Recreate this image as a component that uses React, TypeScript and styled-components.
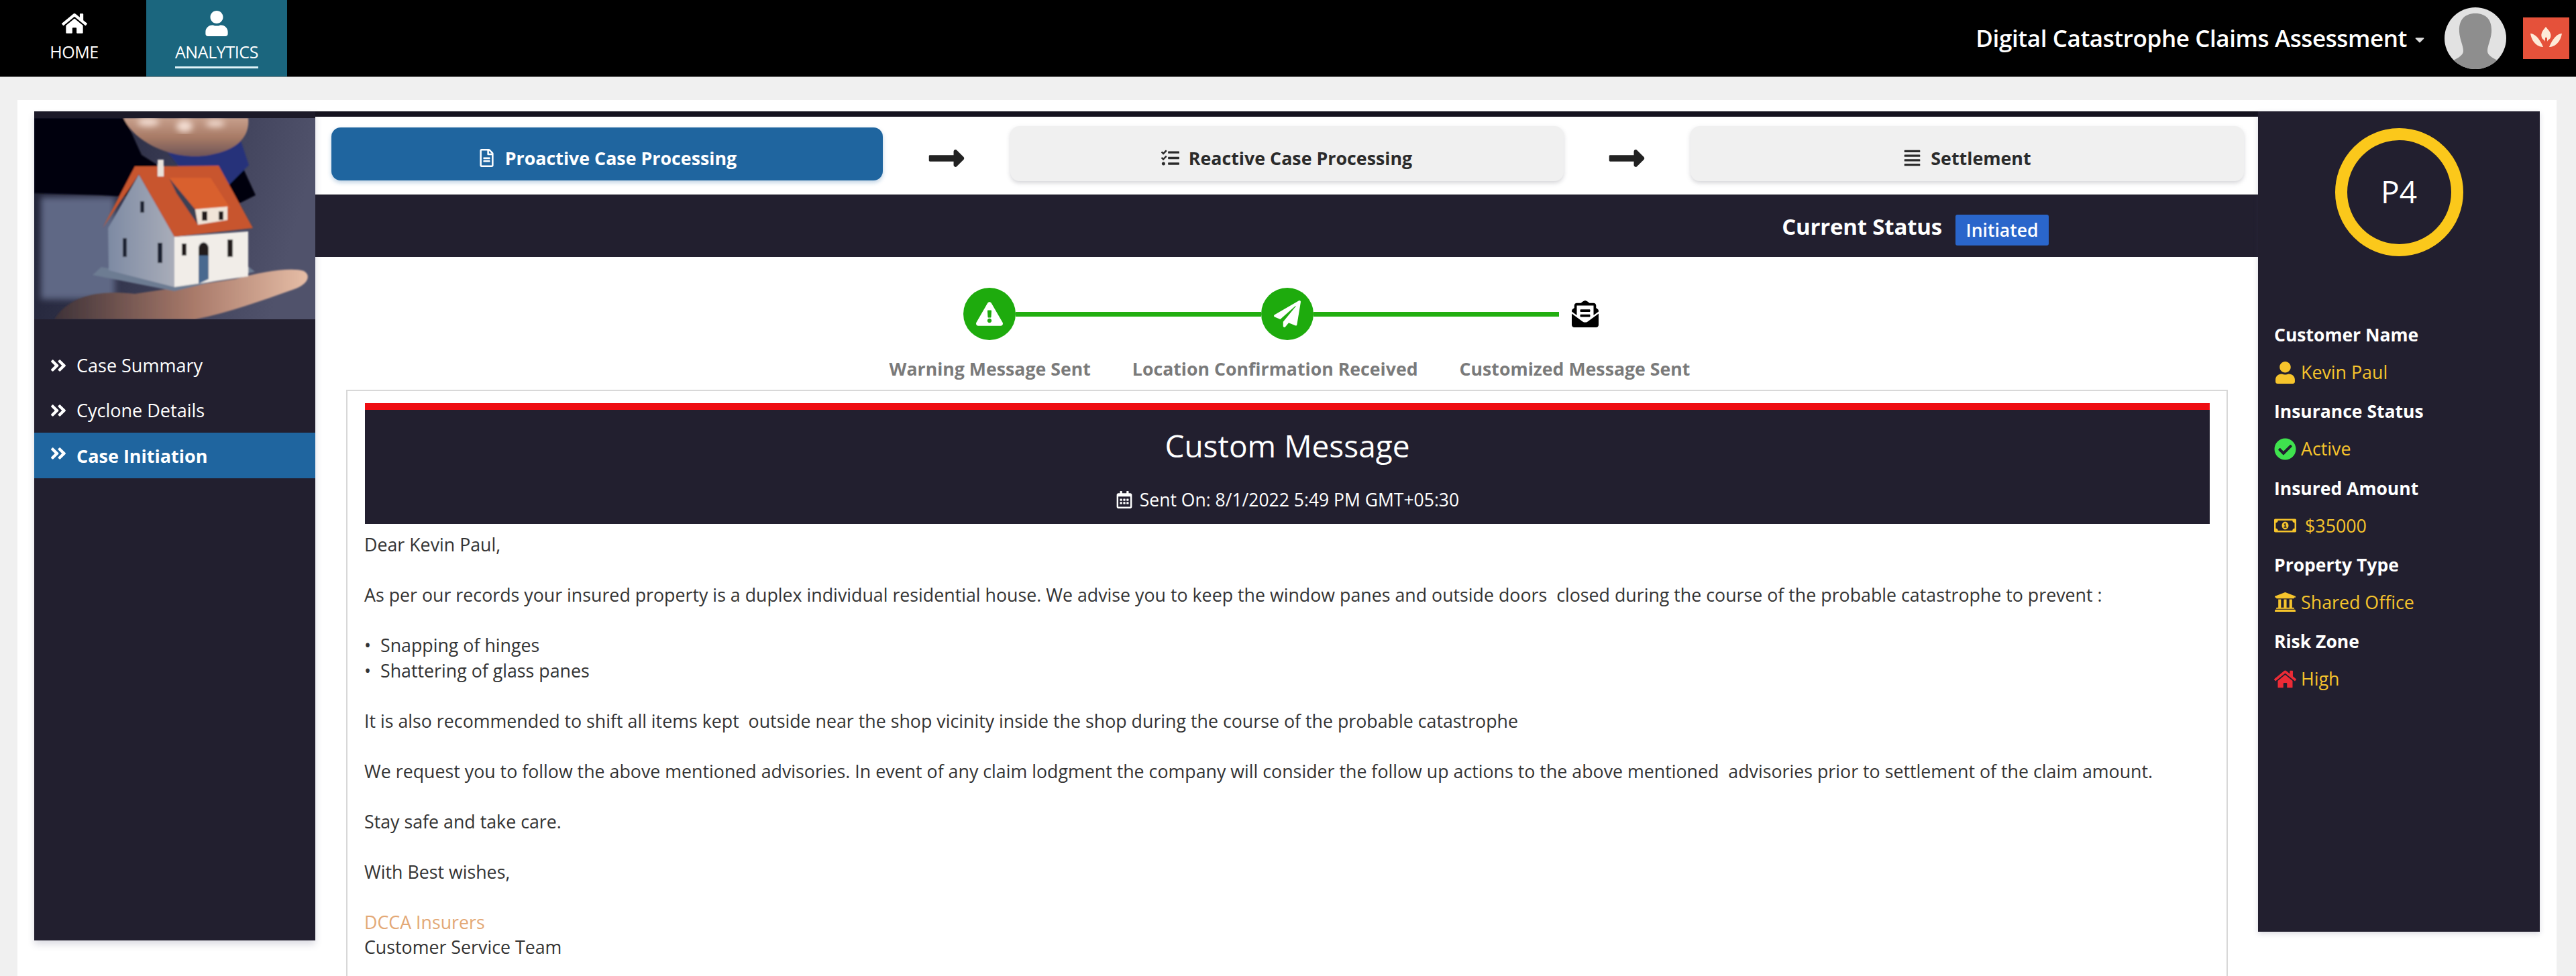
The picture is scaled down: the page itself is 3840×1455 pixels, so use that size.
import React from "react"
import styled, { createGlobalStyle } from "styled-components"
import {
  FaAlignJustify,
  FaAngleDoubleRight,
  FaCaretDown,
  FaCheckCircle,
  FaEnvelopeOpenText,
  FaExclamationTriangle,
  FaHome,
  FaLongArrowAltRight,
  FaPaperPlane,
  FaRegCalendarAlt,
  FaRegFileAlt,
  FaRegMoneyBillAlt,
  FaTasks,
  FaUniversity,
  FaUser,
} from "react-icons/fa"

const dark = "#221f2f"
const blue = "#1f659f"
const amber = "#f6c42c"

const GlobalStyle = createGlobalStyle`
  html, body {
    margin: 0;
    padding: 0;
    background: #f0f0f0;
  }
  body {
    font-family: "Open Sans", "Liberation Sans", sans-serif;
    height: 1455px;
    overflow: hidden;
  }
  * {
    box-sizing: border-box;
  }
`

const TopBar = styled.header`
  height: 115px;
  background: #000;
  border-bottom: 1px solid #8a8a8a;
  display: flex;
  align-items: stretch;
  justify-content: space-between;
  color: #fff;
`

const TabList = styled.nav`
  display: flex;
`

const Tab = styled.div<{ $active?: boolean; $width: number }>`
  width: ${(p) => p.$width}px;
  background: ${(p) => (p.$active ? "#1b667e" : "transparent")};
  display: flex;
  flex-direction: column;
  align-items: center;
  padding-top: 14px;
  padding-left: ${(p) => (p.$active ? 0 : 3)}px;
  font-size: 25px;
  line-height: 34px;
  letter-spacing: -0.4px;
`

const TabIcon = styled.div`
  height: 42px;
  font-size: 38px;
  line-height: 0;
  display: flex;
  align-items: center;
`

const TabLabel = styled.span<{ $active?: boolean }>`
  padding-bottom: 5px;
  margin-top: 4px;
  border-bottom: ${(p) => (p.$active ? "3px solid #dff3f8" : "none")};
`

const TopRight = styled.div`
  display: flex;
  align-items: center;
  padding-right: 10px;
`

const AppTitle = styled.div`
  font-size: 35px;
  font-weight: 600;
  letter-spacing: -0.4px;
  display: flex;
  align-items: center;
  gap: 8px;
  margin-top: -2px;
`

const Caret = styled(FaCaretDown)`
  font-size: 22px;
  color: #ddd;
  margin-top: 6px;
`

const Avatar = styled.svg`
  width: 94px;
  height: 94px;
  margin-left: 25px;
  display: block;
`

const Logo = styled.svg`
  width: 69px;
  height: 62px;
  margin-left: 24px;
  display: block;
`

const Card = styled.main`
  margin: 34px 29px 0 26px;
  padding: 17px 25px 0;
  background: #fff;
  height: 1345px;
  overflow: hidden;
`

const Columns = styled.div`
  display: flex;
  align-items: flex-start;
`

const Sidebar = styled.aside`
  flex: 0 0 419px;
  height: 1236px;
  background: ${dark};
  border-top: 10px solid #1c1a29;
  box-shadow: 0 6px 10px rgba(60, 60, 100, 0.18);
`

const Photo = styled.svg`
  display: block;
  width: 419px;
  height: 300px;
`

const Menu = styled.ul`
  list-style: none;
  margin: 0;
  padding: 35px 0 0;
`

const MenuItem = styled.li<{ $active?: boolean }>`
  height: ${(p) => (p.$active ? 68 : 67)}px;
  display: flex;
  align-items: center;
  padding-left: 22px;
  gap: 13px;
  font-size: 27px;
  color: #fff;
  font-weight: ${(p) => (p.$active ? 700 : 400)};
  background: ${(p) => (p.$active ? blue : "transparent")};
  svg {
    font-size: 28px;
    flex: none;
    margin-top: ${(p) => (p.$active ? -6 : 0)}px;
  }
`

const Center = styled.section`
  flex: 1;
  min-width: 0;
  border-top: 8px solid #15131f;
`

const Steps = styled.div`
  height: 116px;
  display: flex;
  padding: 14px 21px 0 24px;
  align-items: flex-start;
`

const StepButton = styled.div<{ $active?: boolean }>`
  flex: 0 0 ${(p) => (p.$active ? 822 : 825)}px;
  height: ${(p) => (p.$active ? 79 : 82)}px;
  margin-top: ${(p) => (p.$active ? 2 : 0)}px;
  padding-top: 12px;
  border-radius: 14px;
  background: ${(p) => (p.$active ? blue : "#f0f0f0")};
  color: ${(p) => (p.$active ? "#fff" : "#2b2b2b")};
  box-shadow: ${(p) =>
    p.$active
      ? "0 3px 6px rgba(31, 101, 159, 0.3)"
      : "0 3px 6px rgba(120, 120, 130, 0.3)"};
  font-size: 26.8px;
  font-weight: 700;
  display: flex;
  align-items: center;
  justify-content: center;
  gap: 14px;
  svg {
    font-size: 27px;
  }
`

const StepArrow = styled.div`
  flex: 1;
  height: 82px;
  padding-top: 13px;
  display: flex;
  align-items: center;
  justify-content: center;
  font-size: 60px;
  color: #222;
`

const StatusBar = styled.div`
  height: 93px;
  background: ${dark};
  border-top: 1px solid #15131f;
  display: flex;
  align-items: center;
  justify-content: flex-end;
  padding: 12px 312px 0 0;
  gap: 20px;
  color: #fff;
`

const StatusLabel = styled.span`
  font-size: 33px;
  font-weight: 700;
  letter-spacing: -0.2px;
  margin-top: -12px;
`

const Badge = styled.span`
  width: 139px;
  height: 46px;
  background: #2a66cb;
  border-radius: 3px;
  font-size: 26.5px;
  font-weight: 600;
  display: flex;
  align-items: center;
  justify-content: center;
`

const IconRow = styled.div`
  display: flex;
  align-items: center;
  justify-content: center;
  margin-top: 46px;
  padding-right: 18px;
`

const StepCircle = styled.div`
  width: 78px;
  height: 78px;
  border-radius: 50%;
  background: #1eab0d;
  color: #fff;
  font-size: 40px;
  display: flex;
  align-items: center;
  justify-content: center;
`

const StepLine = styled.div`
  width: 366px;
  height: 7px;
  background: #22ae10;
`

const EndIcon = styled.div`
  margin-left: 19px;
  width: 40px;
  font-size: 40px;
  line-height: 0;
  color: #000;
`

const LabelRow = styled.div`
  display: flex;
  justify-content: center;
  gap: 62px;
  padding-left: 9px;
  margin-top: 24px;
  height: 50px;
  font-size: 26.7px;
  line-height: 38px;
  font-weight: 700;
  color: #7a7a7a;
`

const MessageBox = styled.article`
  margin: 0 45px 0 46px;
  border: 2px solid #d8d8d8;
  padding: 18px 25px 60px 26px;
`

const MessageHead = styled.div`
  height: 180px;
  background: ${dark};
  border-top: 10px solid #ee0d12;
  color: #fff;
  text-align: center;
  padding-top: 22px;
`

const MessageTitle = styled.h2`
  margin: 0;
  font-size: 46px;
  line-height: 62px;
  font-weight: 400;
`

const SentOn = styled.div`
  margin-top: 32px;
  font-size: 26.5px;
  line-height: 36px;
  display: flex;
  align-items: center;
  justify-content: center;
  gap: 10px;
  svg {
    font-size: 26px;
  }
`

const Body = styled.div`
  margin-top: 12px;
  margin-left: -1px;
  font-size: 26.78px;
  line-height: 37.5px;
  color: #333;
`

const Line = styled.p<{ $gap?: boolean }>`
  margin: ${(p) => (p.$gap ? "37.5px" : "0")} 0 0;
  white-space: pre-wrap;
`

const Insurer = styled.span`
  color: #e3a875;
`

const Details = styled.aside`
  flex: 0 0 420px;
  height: 1223px;
  background: ${dark};
  padding: 0 0 0 24px;
  box-shadow: 0 3px 8px rgba(60, 60, 100, 0.18);
  color: #fff;
`

const RingWrap = styled.div`
  display: flex;
  padding: 25px 0 0 0;
  margin-left: -24px;
  justify-content: center;
  margin-bottom: 89px;
`

const Ring = styled.div`
  width: 191px;
  height: 191px;
  border: 18px solid #fbc81b;
  border-radius: 50%;
  font-size: 46px;
  padding-bottom: 3px;
  display: flex;
  align-items: center;
  justify-content: center;
`

const Field = styled.div`
  height: 114.3px;
`

const FieldName = styled.div`
  font-size: 26.5px;
  line-height: 56px;
  font-weight: 700;
`

const FieldValue = styled.div<{ $gap?: number }>`
  font-size: 26.8px;
  line-height: 56px;
  color: ${amber};
  display: flex;
  align-items: center;
  gap: ${(p) => p.$gap ?? 7}px;
`

const FieldIcon = styled.span<{ $color?: string }>`
  width: 33px;
  font-size: 33px;
  line-height: 0;
  color: ${(p) => p.$color ?? amber};
  display: flex;
  justify-content: center;
`

const HousePhoto = () => (
  <Photo viewBox="0 0 419 300" preserveAspectRatio="none">
    <defs>
      <linearGradient id="bg" x1="0" x2="1" y1="0" y2="0.2">
        <stop offset="0" stopColor="#1d1f33" />
        <stop offset="0.6" stopColor="#3c3e57" />
        <stop offset="1" stopColor="#50526b" />
      </linearGradient>
      <linearGradient id="wall" x1="0" x2="1" y1="0" y2="0">
        <stop offset="0" stopColor="#7d8aa3" />
        <stop offset="1" stopColor="#a9adb9" />
      </linearGradient>
      <linearGradient id="skin" x1="0" x2="1" y1="0" y2="0">
        <stop offset="0" stopColor="#3e3238" />
        <stop offset="0.55" stopColor="#a97a6a" />
        <stop offset="1" stopColor="#e6bda6" />
      </linearGradient>
      <linearGradient id="topHand" x1="0" x2="0" y1="0" y2="1">
        <stop offset="0" stopColor="#c79f8c" />
        <stop offset="0.5" stopColor="#a87b66" />
        <stop offset="1" stopColor="#6f5558" />
      </linearGradient>
      <filter id="soft" x="-5%" y="-5%" width="110%" height="110%">
        <feGaussianBlur stdDeviation="1.1" />
      </filter>
      <filter id="softer" x="-10%" y="-10%" width="120%" height="120%">
        <feGaussianBlur stdDeviation="5" />
      </filter>
    </defs>
    <rect width="419" height="300" fill="url(#bg)" />
    <g filter="url(#softer)">
      <polygon points="10,118 120,118 120,270 10,270" fill="#5f6885" />
    </g>
    <g filter="url(#soft)">
      <polygon
        points="0,0 135,0 160,55 200,80 300,50 330,115 300,130 180,120 100,115 0,112"
        fill="#06060f"
      />
      <polygon points="190,40 305,25 320,70 290,100 230,90" fill="#27337a" />
      <path
        d="M133 0 H319 C322 30 300 48 262 55 C225 62 190 50 170 38 C150 26 140 14 133 0 Z"
        fill="url(#topHand)"
      />
      <path
        d="M30 300 C50 268 90 255 150 262 L300 240 C340 228 385 222 402 228 C415 236 405 250 385 256 C340 272 290 290 240 300 Z"
        fill="url(#skin)"
      />
      <polygon points="87,234 209,258 329,229 320,222 209,240 100,222" fill="#6d7b92" />
      <polygon points="156,84 110,164 111,227 209,252 209,177" fill="url(#wall)" />
      <polygon points="209,177 319,169 319,236 209,252" fill="#f1ede8" />
      <polygon points="156,72 275,71 326,164 209,177 156,84 102,164 150,72" fill="#c8542e" />
      <polygon points="201,89 240,136 244,159 212,112" fill="#3a3f52" />
      <polygon points="201,89 263,89 292,134 240,136" fill="#d9602f" />
      <polygon points="240,136 288,132 288,152 244,159" fill="#f0e4d8" />
      <rect x="250" y="139" width="8" height="14" fill="#221a1a" />
      <rect x="275" y="139" width="7" height="13" fill="#221a1a" />
      <rect x="184" y="62" width="9" height="25" fill="#e9e2da" />
      <rect x="158" y="124" width="6" height="17" fill="#1f2230" />
      <rect x="132" y="179" width="6" height="28" fill="#1f2230" />
      <rect x="184" y="186" width="7" height="30" fill="#1f2230" />
      <rect x="220" y="187" width="7" height="18" fill="#221a1a" />
      <rect x="288" y="181" width="8" height="26" fill="#221a1a" />
      <path d="M245 247 V196 C245 182 260 182 260 196 V240 Z" fill="#49698f" />
      <path d="M245 196 C245 182 260 182 260 196 V205 H245 Z" fill="#221a1a" />
    </g>
    <g filter="url(#softer)" fill="#f3ddd2">
      <ellipse cx="170" cy="6" rx="16" ry="6" />
      <ellipse cx="224" cy="12" rx="12" ry="9" />
      <ellipse cx="270" cy="8" rx="14" ry="5" />
    </g>
  </Photo>
)

const fields = [
  {
    name: "Customer Name",
    value: "Kevin Paul",
    icon: <FaUser />,
  },
  {
    name: "Insurance Status",
    value: "Active",
    icon: <FaCheckCircle />,
    color: "#3fe24e",
  },
  {
    name: "Insured Amount",
    value: "$35000",
    icon: <FaRegMoneyBillAlt />,
    gap: 13,
  },
  {
    name: "Property Type",
    value: "Shared Office",
    icon: <FaUniversity />,
  },
  {
    name: "Risk Zone",
    value: "High",
    icon: <FaHome />,
    color: "#ec2b36",
  },
]

const App = () => {
  return (
    <>
      <GlobalStyle />
      <TopBar>
        <TabList>
          <Tab $width={218}>
            <TabIcon>
              <FaHome />
            </TabIcon>
            <TabLabel>HOME</TabLabel>
          </Tab>
          <Tab $width={210} $active>
            <TabIcon>
              <FaUser />
            </TabIcon>
            <TabLabel $active>ANALYTICS</TabLabel>
          </Tab>
        </TabList>
        <TopRight>
          <AppTitle>
            Digital Catastrophe Claims Assessment
            <Caret />
          </AppTitle>
          <Avatar viewBox="0 0 94 94">
            <defs>
              <clipPath id="avatarClip">
                <circle cx="47" cy="47" r="46" />
              </clipPath>
            </defs>
            <circle cx="47" cy="47" r="46" fill="#e2e2e2" />
            <path
              clipPath="url(#avatarClip)"
              d="M47 10 C29 10 22 22 23 38 C24 50 29 58 29 66 C29 72 22 76 14 80 L14 94 H80 L80 80 C72 76 65 72 65 66 C65 58 70 50 71 38 C72 22 65 10 47 10 Z"
              fill="#8e8e8e"
            />
          </Avatar>
          <Logo viewBox="0 0 69 62">
            <rect width="69" height="62" fill="#e5513a" />
            <g fill="#fdebd8">
              <path d="M34 14 C29 20 26 24 28 30 C29 33 32 33 33 36 V30 H36 V36 C37 33 40 33 41 30 C43 24 39 20 34 14 Z" />
              <path d="M11 24 C17 24 24 30 30 44 C24 44 14 40 11 24 Z" />
              <path d="M58 24 C52 24 45 30 39 44 C45 44 55 40 58 24 Z" />
            </g>
          </Logo>
        </TopRight>
      </TopBar>

      <Card>
        <Columns>
          <Sidebar>
            <HousePhoto />
            <Menu>
              <MenuItem>
                <FaAngleDoubleRight />
                Case Summary
              </MenuItem>
              <MenuItem>
                <FaAngleDoubleRight />
                Cyclone Details
              </MenuItem>
              <MenuItem $active>
                <FaAngleDoubleRight />
                Case Initiation
              </MenuItem>
            </Menu>
          </Sidebar>

          <Center>
            <Steps>
              <StepButton $active>
                <FaRegFileAlt />
                Proactive Case Processing
              </StepButton>
              <StepArrow>
                <FaLongArrowAltRight />
              </StepArrow>
              <StepButton>
                <FaTasks />
                Reactive Case Processing
              </StepButton>
              <StepArrow>
                <FaLongArrowAltRight />
              </StepArrow>
              <StepButton>
                <FaAlignJustify />
                Settlement
              </StepButton>
            </Steps>

            <StatusBar>
              <StatusLabel>Current Status</StatusLabel>
              <Badge>Initiated</Badge>
            </StatusBar>

            <IconRow>
              <StepCircle>
                <FaExclamationTriangle />
              </StepCircle>
              <StepLine />
              <StepCircle>
                <FaPaperPlane />
              </StepCircle>
              <StepLine />
              <EndIcon>
                <FaEnvelopeOpenText />
              </EndIcon>
            </IconRow>
            <LabelRow>
              <span>Warning Message Sent</span>
              <span>Location Confirmation Received</span>
              <span>Customized Message Sent</span>
            </LabelRow>

            <MessageBox>
              <MessageHead>
                <MessageTitle>Custom Message</MessageTitle>
                <SentOn>
                  <FaRegCalendarAlt />
                  Sent On: 8/1/2022 5:49 PM GMT+05:30
                </SentOn>
              </MessageHead>
              <Body>
                <Line>Dear Kevin Paul,</Line>
                <Line $gap>
                  As per our records your insured property is a duplex individual residential house. We advise you to keep the window panes and outside doors  closed during the course of the probable catastrophe to prevent :
                </Line>
                <Line $gap>•  Snapping of hinges</Line>
                <Line>•  Shattering of glass panes</Line>
                <Line $gap>
                  It is also recommended to shift all items kept  outside near the shop vicinity inside the shop during the course of the probable catastrophe
                </Line>
                <Line $gap>
                  We request you to follow the above mentioned advisories. In event of any claim lodgment the company will consider the follow up actions to the above mentioned  advisories prior to settlement of the claim amount.
                </Line>
                <Line $gap>Stay safe and take care.</Line>
                <Line $gap>With Best wishes,</Line>
                <Line $gap>
                  <Insurer>DCCA Insurers</Insurer>
                </Line>
                <Line>Customer Service Team</Line>
              </Body>
            </MessageBox>
          </Center>

          <Details>
            <RingWrap>
              <Ring>P4</Ring>
            </RingWrap>
            {fields.map((f) => (
              <Field key={f.name}>
                <FieldName>{f.name}</FieldName>
                <FieldValue $gap={f.gap}>
                  <FieldIcon $color={f.color}>{f.icon}</FieldIcon>
                  {f.value}
                </FieldValue>
              </Field>
            ))}
          </Details>
        </Columns>
      </Card>
    </>
  )
}

export default App
